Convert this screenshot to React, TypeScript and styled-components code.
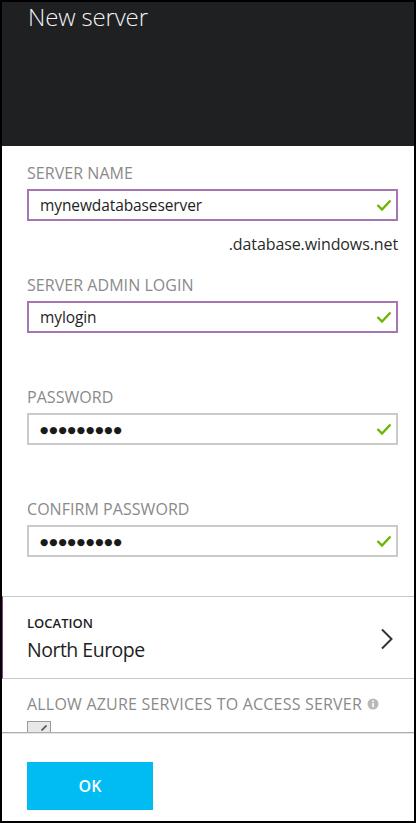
import { createGlobalStyle, styled } from 'styled-components'

const GlobalStyle = createGlobalStyle`
  html, body {
    margin: 0;
    padding: 0;
    background: #000;
  }
  body {
    font-family: 'Open Sans', 'Noto Sans', sans-serif;
  }
`

const Frame = styled.div`
  width: 416px;
  height: 823px;
  box-sizing: border-box;
  border: 2px solid #000;
  background: #fff;
  display: flex;
  flex-direction: column;
  overflow: hidden;
`

const Header = styled.header`
  height: 144px;
  flex-shrink: 0;
  background: #1e2022;
  padding: 1px 26px 0;
  box-sizing: border-box;
`

const Title = styled.h1`
  margin: 0;
  font-size: 24px;
  line-height: 28px;
  font-weight: 300;
  color: #f2f2f2;
  letter-spacing: -0.15px;
`

const Body = styled.div`
  height: 586px;
  flex-shrink: 0;
  overflow: hidden;
`

const FieldList = styled.div`
  display: flex;
  flex-direction: column;
  gap: 21px;
  padding: 17px 16px 6px 25px;
`

const Field = styled.div`
  display: flex;
  flex-direction: column;
`

const Label = styled.label`
  font-size: 16px;
  line-height: 20px;
  color: #8a8a8a;
  letter-spacing: 0.05px;
`

const InputBox = styled.div<{ $active?: boolean }>`
  margin-top: 6px;
  height: 32px;
  box-sizing: border-box;
  border: 2px solid ${p => (p.$active ? '#a774b4' : '#cacaca')};
  display: flex;
  align-items: center;
  padding: 0 4px 0 11px;
`

const Value = styled.span`
  flex: 1;
  font-size: 15.5px;
  color: #1e1e1e;
  letter-spacing: -0.1px;
`

const Dots = styled.span`
  flex: 1;
  font-family: 'DejaVu Sans', sans-serif;
  font-size: 9.5px;
  letter-spacing: 0.9px;
  color: #1a1a1a;
  line-height: 20px;
  padding-top: 1px;
`

const Hint = styled.div`
  margin-top: 13px;
  height: 20px;
  font-size: 16px;
  line-height: 20px;
  text-align: right;
  color: #2a2a2a;
  letter-spacing: -0.1px;
`

const LocationRow = styled.div`
  border-top: 1px solid #c8c8c8;
  border-bottom: 1px solid #c8c8c8;
  border-left: 1px solid #8c3d94;
  display: flex;
  align-items: center;
  padding: 18px 20px 15px 24px;
`

const LocationText = styled.div`
  flex: 1;
  display: flex;
  flex-direction: column;
  gap: 6px;
`

const SmallCaps = styled.span`
  font-size: 13px;
  line-height: 16px;
  font-weight: 600;
  color: #1e1e1e;
`

const LocationValue = styled.span`
  font-size: 19.5px;
  line-height: 26px;
  color: #1e1e1e;
  letter-spacing: -0.5px;
`

const AllowSection = styled.div`
  padding: 15px 16px 0 25px;
  display: flex;
  flex-direction: column;
  gap: 7px;
`

const AllowLabel = styled.div`
  display: flex;
  align-items: center;
  gap: 5px;
  font-size: 16px;
  line-height: 20px;
  color: #8a8a8a;
  letter-spacing: 0.2px;
`

const Checkbox = styled.div`
  width: 24px;
  height: 24px;
  box-sizing: border-box;
  border: 1px solid #9a9a9a;
  background: #e8e8e8;
  display: flex;
  justify-content: flex-end;
  padding: 3px 3px 0 0;
`

const Footer = styled.footer`
  flex: 1;
  border-top: 1px solid #acacac;
  box-shadow: inset 0 1px 0 #e6e6e6;
  padding: 29px 25px 0;
`

const OkButton = styled.button`
  width: 126px;
  height: 48px;
  border: none;
  background: #00bcf2;
  color: #fff;
  font-family: 'Open Sans', sans-serif;
  font-size: 16px;
  font-weight: 600;
  cursor: pointer;
`

const Check = () => (
  <svg width="16" height="12" viewBox="0 0 16 12">
    <path d="M1.5 6 L6 10.5 L14.5 1.5" fill="none" stroke="#6bb700" strokeWidth="2.4" />
  </svg>
)

const Chevron = () => (
  <svg width="14" height="22" viewBox="0 0 14 22">
    <path d="M2 1.5 L11.5 11 L2 20.5" fill="none" stroke="#333" strokeWidth="2" />
  </svg>
)

const InfoIcon = () => (
  <svg width="12" height="12" viewBox="0 0 12 12">
    <circle cx="6" cy="6" r="5.5" fill="#b9b9b9" />
    <rect x="5.2" y="5" width="1.6" height="4.2" fill="#fff" />
    <rect x="5.2" y="2.6" width="1.6" height="1.5" fill="#fff" />
  </svg>
)

const fields = [
  { label: 'SERVER NAME', value: 'mynewdatabaseserver', active: true, hint: '.database.windows.net' },
  { label: 'SERVER ADMIN LOGIN', value: 'mylogin', active: true, hint: '' },
  { label: 'PASSWORD', value: '', secret: true, hint: '' },
  { label: 'CONFIRM PASSWORD', value: '', secret: true, hint: '' },
]

const App = () => {
  return (
    <>
      <GlobalStyle />
      <Frame>
        <Header>
          <Title>New server</Title>
        </Header>
        <Body>
          <FieldList>
            {fields.map(f => (
              <Field key={f.label}>
                <Label>{f.label}</Label>
                <InputBox $active={f.active}>
                  {f.secret ? <Dots>●●●●●●●●●</Dots> : <Value>{f.value}</Value>}
                  <Check />
                </InputBox>
                <Hint>{f.hint}</Hint>
              </Field>
            ))}
          </FieldList>
          <LocationRow>
            <LocationText>
              <SmallCaps>LOCATION</SmallCaps>
              <LocationValue>North Europe</LocationValue>
            </LocationText>
            <Chevron />
          </LocationRow>
          <AllowSection>
            <AllowLabel>
              ALLOW AZURE SERVICES TO ACCESS SERVER
              <InfoIcon />
            </AllowLabel>
            <Checkbox>
              <svg width="6" height="6" viewBox="0 0 6 6">
                <path d="M0.5 5.5 L5.5 0.5" stroke="#555" strokeWidth="1.6" />
              </svg>
            </Checkbox>
          </AllowSection>
        </Body>
        <Footer>
          <OkButton>OK</OkButton>
        </Footer>
      </Frame>
    </>
  )
}

export default App
